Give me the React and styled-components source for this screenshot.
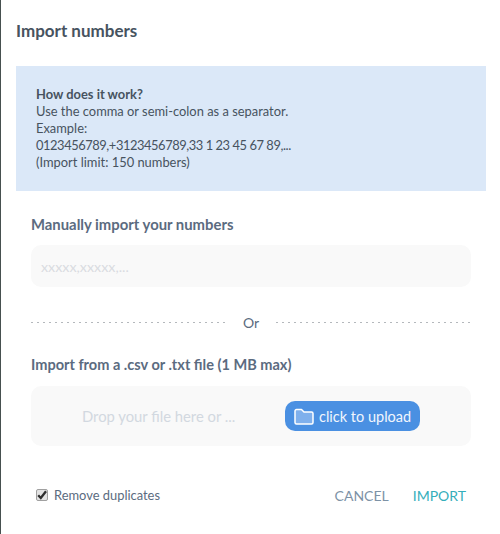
import React from "react";
import styled, { createGlobalStyle } from "styled-components";

const Global = createGlobalStyle`
  html, body { margin: 0; padding: 0; background: #fff; }
  body { font-family: Lato, "Open Sans", sans-serif; }
`;
const Modal = styled.div`
  width: 500px; height: 534px; box-sizing: border-box; background: #fff;
  border-left: 1px solid #46504f; overflow: hidden;
  display: flex; flex-direction: column; padding: 0 14px 0 15px;
`;
const Title = styled.h2`
  margin: 0; height: 66px; box-sizing: border-box; padding-top: 21px;
  font-size: 17px; line-height: 20px; font-weight: 700; color: #47535f;
`;
const Info = styled.div`
  height: 125px; box-sizing: border-box; padding: 20px;
  background: #dbe8f8; color: #47535f; font-size: 12.9px; line-height: 17px;
`;
const InfoTitle = styled.div`font-weight: 700;`;
const Numbers = styled.div`letter-spacing: -0.44px;`;
const Section = styled.section`
  padding: 0 15px; display: flex; flex-direction: column;
`;
const Label = styled.div`
  font-size: ${p => p.$size}px; line-height: 18px; font-weight: 700; color: #5b6b80;
  margin-top: ${p => p.$top}px; margin-bottom: 12px;
`;
const Field = styled.div`
  height: 42px; box-sizing: border-box; padding: 0 10px; display: flex; align-items: center;
  background: #f9f9f9; border-radius: 10px; color: #d9dce1; font-size: 14.3px;
`;
const Divider = styled.div`
  display: flex; align-items: center; gap: 17px; margin-top: 25px; height: 20px;
  color: #5b6b80; font-size: 14px;
`;
const Dots = styled.span`
  flex: 1; height: 1px;
  background: repeating-linear-gradient(to right, #b4b8bc 0 2px, transparent 2px 6px);
`;
const Drop = styled.div`
  height: 60px; box-sizing: border-box; display: flex; align-items: center;
  padding-left: 51px; background: #f9f9f9; border-radius: 10px;
`;
const DropText = styled.span`width: 203px; color: #d2d8e0; font-size: 14.8px;`;
const UploadButton = styled.button`
  width: 135px; height: 30px; padding: 0 0 0 9px; border: 0; border-radius: 10px;
  display: flex; align-items: center; gap: 5px; background: #4a90e2; color: #f1f6fd;
  font: 400 14.5px Lato, sans-serif;
`;
const Footer = styled.div`
  display: flex; align-items: center; margin-top: 38px; height: 22px; padding: 0 5px;
`;
const Check = styled.label`
  display: flex; align-items: center; gap: 6px; color: #5b6b80; font-size: 12.9px; flex: 1;
`;
const CheckBox = styled.span`
  width: 12px; height: 12px; box-sizing: border-box; display: flex; align-items: center; justify-content: center;
  background: #e3e3e3; border: 1px solid #a0a0a0; border-radius: 2px;
`;
const Action = styled.button`
  border: 0; background: none; padding: 0; margin-left: ${p => p.$gap}px;
  color: ${p => p.$color}; font: 400 14px Lato, sans-serif;
`;

export default function App() {
  return (
    <Modal>
      <Global />
      <Title>Import numbers</Title>
      <Info>
        <InfoTitle>How does it work?</InfoTitle>
        <div>Use the comma or semi-colon as a separator.</div>
        <div>Example:</div>
        <Numbers>0123456789,+3123456789,33 1 23 45 67 89,...</Numbers>
        <div>(Import limit: 150 numbers)</div>
      </Info>
      <Section>
        <Label $top={24} $size={14.85}>Manually import your numbers</Label>
        <Field>xxxxx,xxxxx,...</Field>
        <Divider><Dots /><span>Or</span><Dots /></Divider>
        <Label $top={24} $size={14.55}>Import from a .csv or .txt file (1 MB max)</Label>
        <Drop>
          <DropText>Drop your file here or ...</DropText>
          <UploadButton>
            <svg width="20" height="17" viewBox="0 0 20 17">
              <path d="M1 3a1.5 1.5 0 0 1 1.5-1.5h5L10 4h7.5A1.5 1.5 0 0 1 19 5.5v9a1.5 1.5 0 0 1-1.5 1.5h-15A1.5 1.5 0 0 1 1 14.5z" fill="#7fb0ec" stroke="#fff" strokeWidth="1.5" strokeLinejoin="round" />
            </svg>
            click to upload
          </UploadButton>
        </Drop>
        <Footer>
          <Check>
            <CheckBox>
              <svg width="10" height="10" viewBox="0 0 10 10">
                <path d="M1.2 5.2l2.6 2.8L9 1.2" fill="none" stroke="#2e2e2e" strokeWidth="2.3" />
              </svg>
            </CheckBox>
            Remove duplicates
          </Check>
          <Action $color="#7d92a6">CANCEL</Action>
          <Action $color="#35aebb" $gap={24}>IMPORT</Action>
        </Footer>
      </Section>
    </Modal>
  );
}
